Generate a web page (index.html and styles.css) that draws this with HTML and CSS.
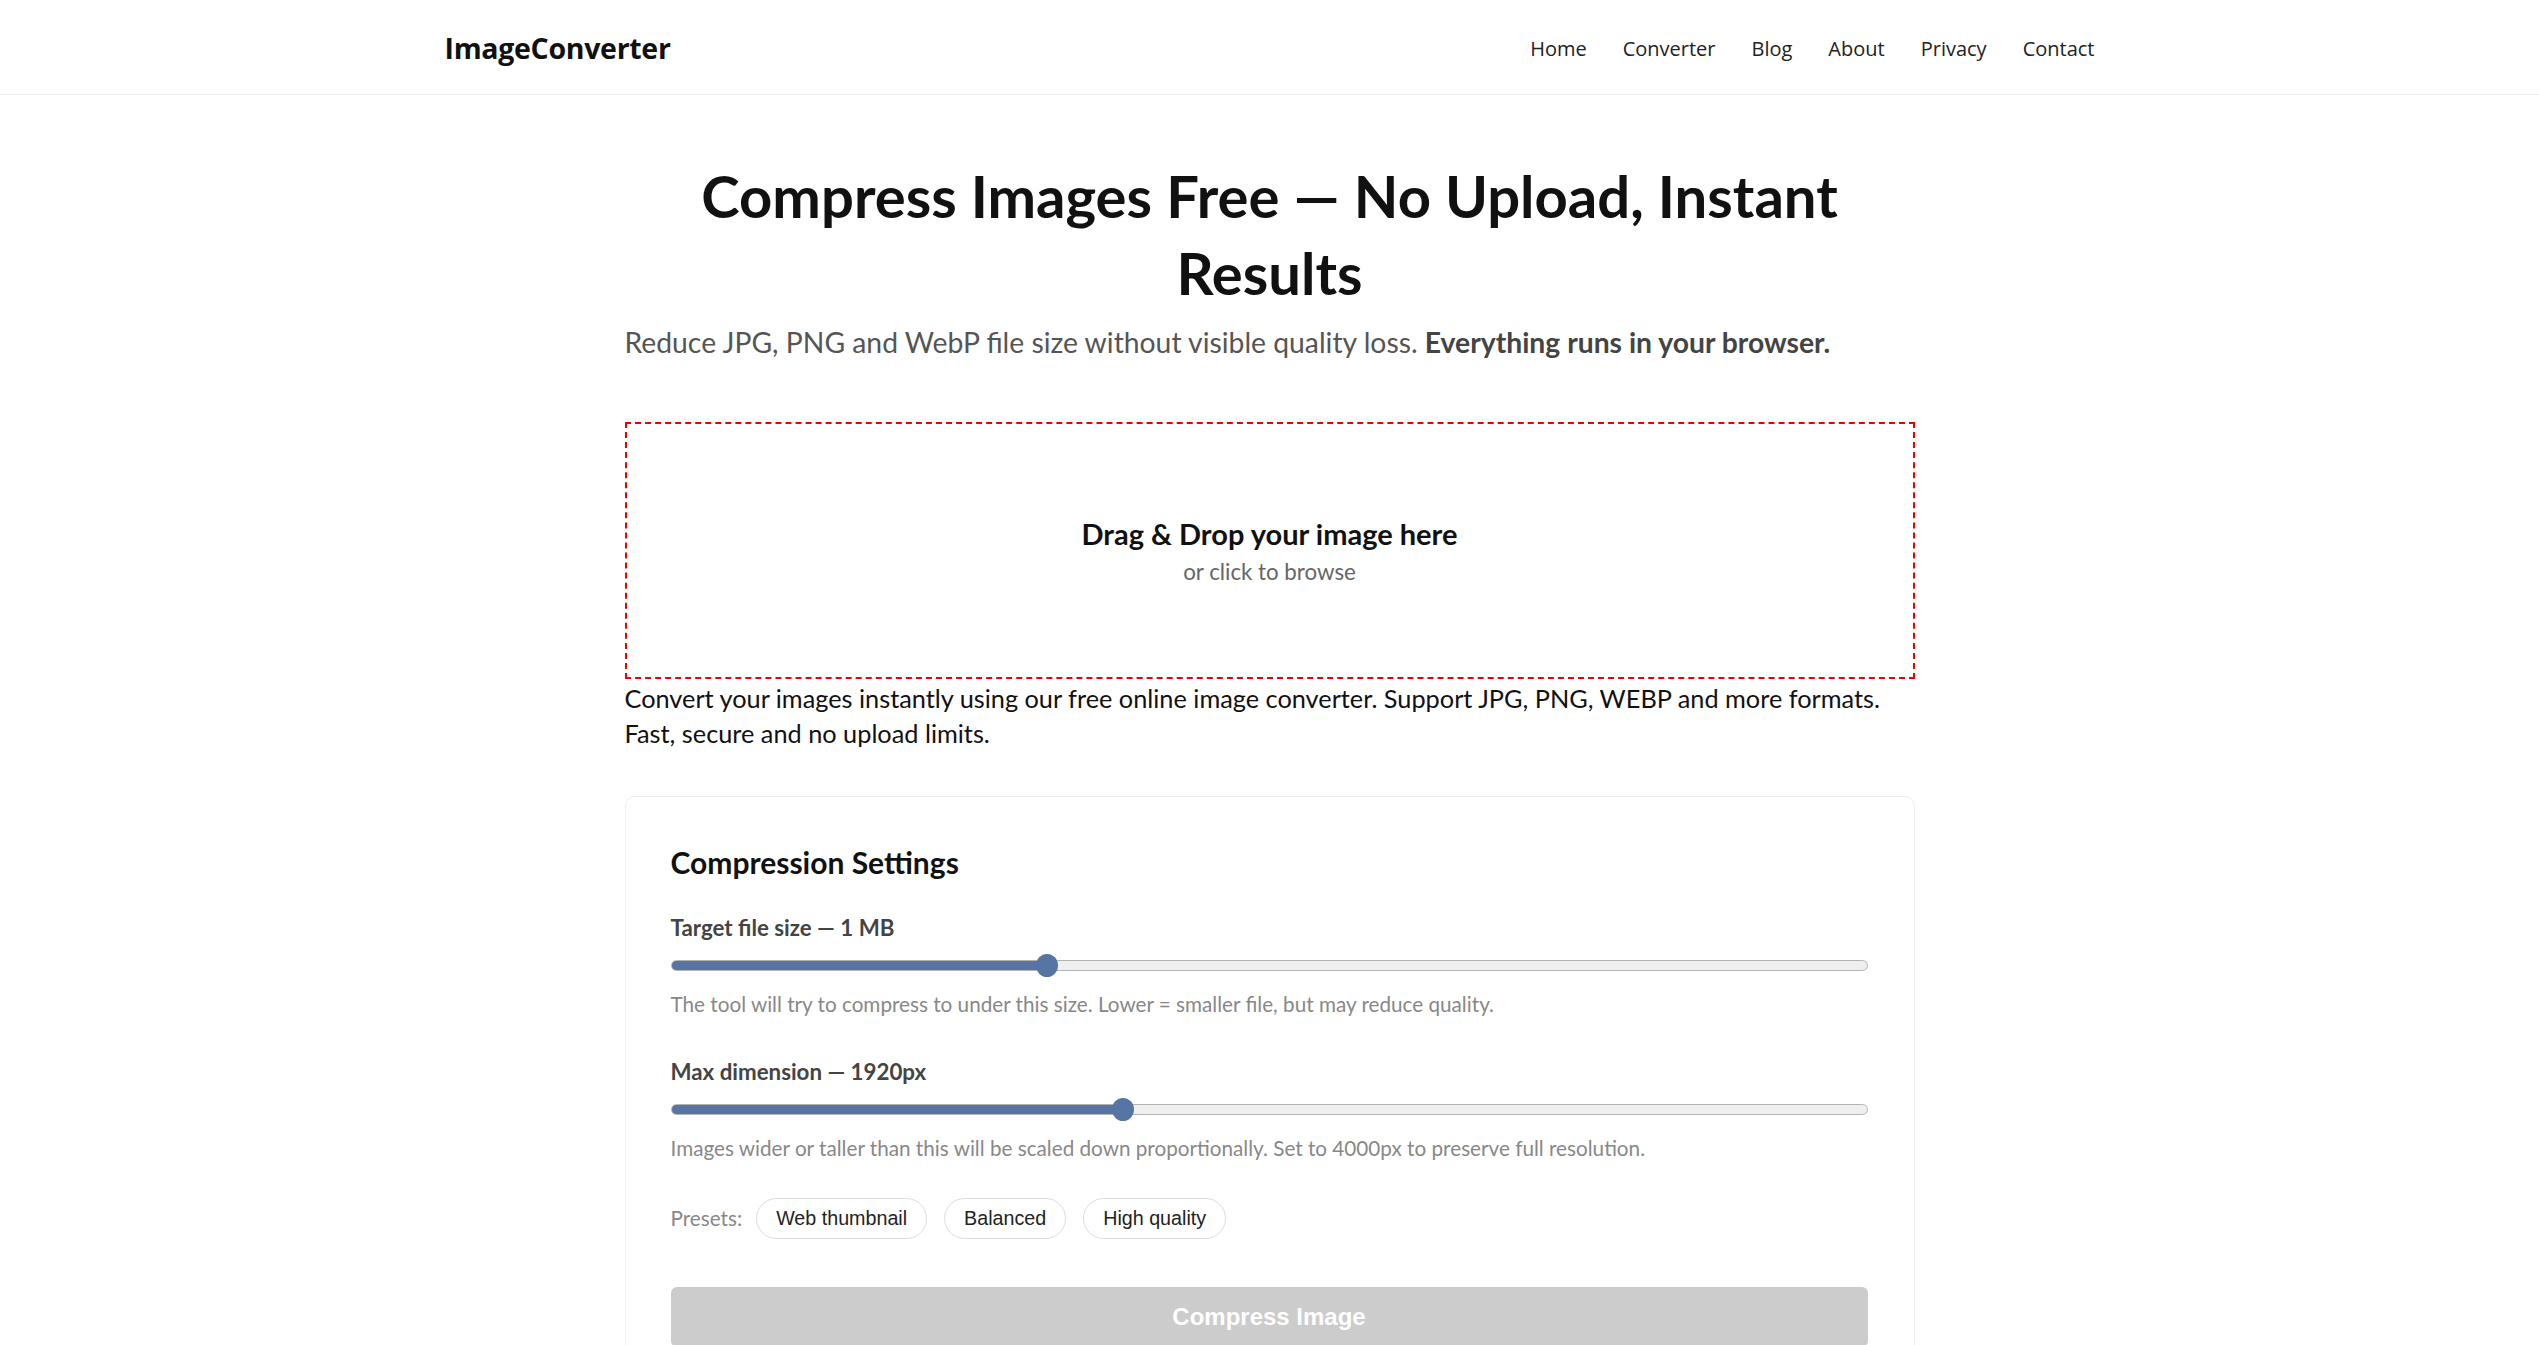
FILE: index.html
```html
<!DOCTYPE html>
<html lang="en">
<head>
<meta charset="utf-8">
<title>Compress Images Free — ImageConverter</title>
<link rel="stylesheet" href="styles.css">
</head>
<body>
<header class="site-header">
  <div class="header-inner">
    <a class="logo" href="#">ImageConverter</a>
    <nav class="nav">
      <a href="#">Home</a>
      <a href="#">Converter</a>
      <a href="#">Blog</a>
      <a href="#">About</a>
      <a href="#">Privacy</a>
      <a href="#">Contact</a>
    </nav>
  </div>
</header>

<main class="main">
  <h1 class="title">Compress Images Free — No Upload, Instant Results</h1>
  <p class="subtitle">Reduce JPG, PNG and WebP file size without visible quality loss. <strong>Everything runs in your browser.</strong></p>

  <div class="dropzone">
    <div class="drop-title">Drag &amp; Drop your image here</div>
    <div class="drop-sub">or click to browse</div>
  </div>
  <p class="intro">Convert your images instantly using our free online image converter. Support JPG, PNG, WEBP and more formats. Fast, secure and no upload limits.</p>

  <section class="card">
    <h2 class="card-title">Compression Settings</h2>

    <div class="field">
      <label class="field-label">Target file size — 1 MB</label>
      <input class="range" type="range" min="0.1" max="3" step="0.1" value="1" style="--p:31%">
      <p class="help">The tool will try to compress to under this size. Lower = smaller file, but may reduce quality.</p>
    </div>

    <div class="field">
      <label class="field-label">Max dimension — 1920px</label>
      <input class="range" type="range" min="670" max="4000" step="10" value="1920" style="--p:37.7%">
      <p class="help">Images wider or taller than this will be scaled down proportionally. Set to 4000px to preserve full resolution.</p>
    </div>

    <div class="presets">
      <span class="presets-label">Presets:</span>
      <button class="pill">Web thumbnail</button>
      <button class="pill">Balanced</button>
      <button class="pill">High quality</button>
    </div>

    <button class="compress-btn" disabled>Compress Image</button>
  </section>
</main>
</body>
</html>
```

FILE: styles.css
```css
* { box-sizing: border-box; }

html, body {
  margin: 0;
  padding: 0;
  background: #fff;
}

body {
  font-family: Lato, "Open Sans", sans-serif;
  color: #111;
}

a { text-decoration: none; color: inherit; }

.site-header {
  border-bottom: 1px solid #eee;
}

.header-inner {
  width: 1650px;
  margin: 0 auto;
  height: 94px;
  padding-top: 2px;
  display: flex;
  align-items: center;
  justify-content: space-between;
}

.logo {
  font-family: "Open Sans", sans-serif;
  font-weight: 700;
  font-size: 28.5px;
  letter-spacing: -0.3px;
  color: #111;
}

.nav {
  display: flex;
  gap: 36px;
  font-family: "Open Sans", sans-serif;
  font-size: 20px;
  color: #222;
}

.main {
  width: 1290px;
  margin: 0 auto;
  padding-top: 63px;
}

.title {
  margin: 0;
  text-align: center;
  font-size: 58px;
  line-height: 76.8px;
  font-weight: 700;
  color: #111;
}

.subtitle {
  margin: 9px 0 0;
  font-size: 28.3px;
  line-height: 43px;
  color: #555;
}

.subtitle strong {
  color: #444;
  font-weight: 700;
}

.dropzone {
  margin-top: 58px;
  height: 257px;
  border: 2px dashed #e00;
  display: flex;
  flex-direction: column;
  align-items: center;
  justify-content: center;
  text-align: center;
}

.drop-title {
  font-size: 29px;
  line-height: 39px;
  font-weight: 700;
  color: #111;
}

.drop-sub {
  margin-top: 4px;
  font-size: 22.3px;
  line-height: 30px;
  color: #666;
}

.intro {
  margin: 2px 0 0;
  font-size: 25.3px;
  line-height: 35.6px;
  color: #111;
}

.card {
  margin-top: 44px;
  border: 1px solid #eee;
  border-radius: 10px;
  padding: 48px 46px 40px 45px;
}

.card-title {
  margin: 0;
  font-size: 30px;
  line-height: 35px;
  font-weight: 700;
  color: #111;
}

.field { margin-top: 32px; }
.field + .field { margin-top: 37px; }

.field-label {
  display: block;
  font-size: 22.3px;
  line-height: 31px;
  font-weight: 700;
  color: #444;
}

.range {
  -webkit-appearance: none;
  appearance: none;
  display: block;
  width: 100%;
  height: 22px;
  margin: 12px 0 0;
  background: transparent;
}

.range::-webkit-slider-runnable-track {
  height: 11px;
  border-radius: 6px;
  border: 1px solid #b3b3b3;
  background: linear-gradient(to right, #5674a4 0, #5674a4 var(--p), #efefef var(--p), #efefef 100%);
}

.range::-webkit-slider-thumb {
  -webkit-appearance: none;
  appearance: none;
  width: 22px;
  height: 23px;
  margin-top: -7px;
  border-radius: 50%;
  background: #5674a4;
  border: none;
}

.help {
  margin: 13px 0 0;
  font-size: 20.7px;
  line-height: 29px;
  color: #888;
}

.presets {
  margin-top: 35px;
  display: flex;
  align-items: center;
  gap: 17px;
}

.presets-label {
  font-size: 20.7px;
  color: #888;
  margin-right: -3px;
}

.pill {
  font-family: "Liberation Sans", Arial, sans-serif;
  font-size: 19.7px;
  color: #222;
  background: #fff;
  border: 1px solid #ddd;
  border-radius: 22px;
  height: 41px;
  padding: 0 19px;
}

.compress-btn {
  display: block;
  width: 100%;
  margin-top: 48px;
  height: 60px;
  border: none;
  border-radius: 6px;
  background: #ccc;
  color: #fff;
  font-family: "Liberation Sans", Arial, sans-serif;
  font-size: 24px;
  font-weight: 700;
}
```
